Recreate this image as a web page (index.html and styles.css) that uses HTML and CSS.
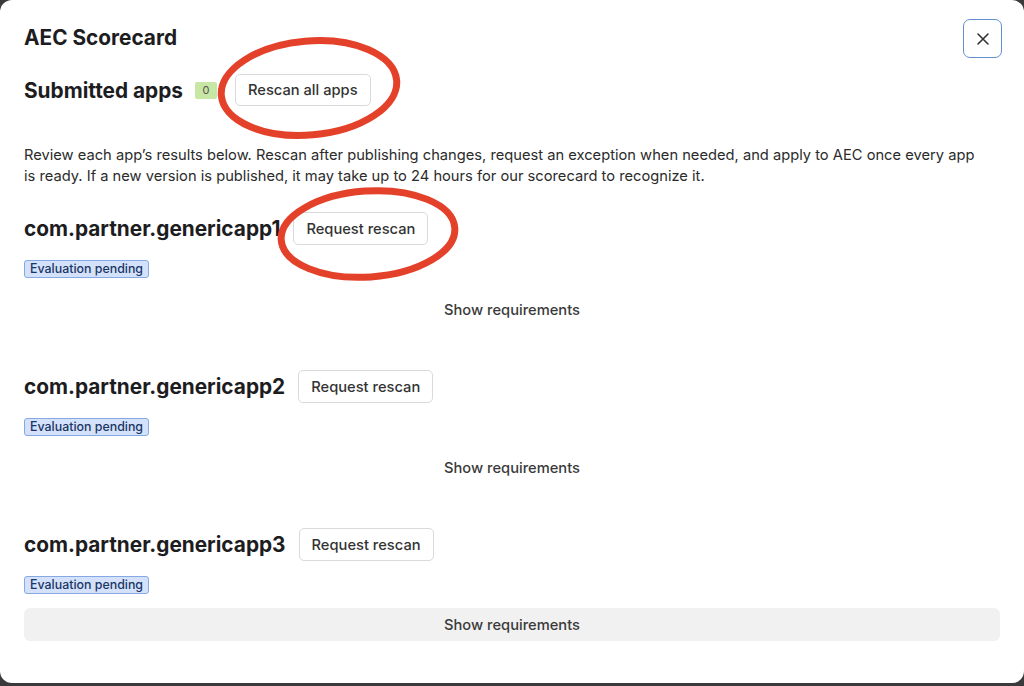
FILE: index.html
```html
<!DOCTYPE html>
<html lang="en">
<head>
	<meta charset="UTF-8">
	<title>AEC Scorecard</title>
	<link rel="stylesheet" href="styles.css">
</head>
<body>
	<div class="modal">
		<button class="close" aria-label="Close">
			<svg width="14" height="14" viewBox="0 0 14 14"><path d="M2 2L12 12M12 2L2 12" stroke="#333" stroke-width="1.6" stroke-linecap="round"/></svg>
		</button>

		<h1 class="title">AEC Scorecard</h1>

		<div class="submitted">
			<h2 class="submitted-title">Submitted apps</h2>
			<span class="count">0</span>
			<button class="btn rescan-all">Rescan all apps</button>
		</div>

		<p class="intro">Review each app’s results below. Rescan after publishing changes, request an exception when needed, and apply to AEC once every app is ready. If a new version is published, it may take up to 24 hours for our scorecard to recognize it.</p>

		<div class="app">
			<div class="app-head">
				<h3 class="app-name">com.partner.genericapp1</h3>
				<button class="btn">Request rescan</button>
			</div>
			<span class="status">Evaluation pending</span>
			<button class="toggle">Show requirements</button>
		</div>

		<div class="app">
			<div class="app-head">
				<h3 class="app-name">com.partner.genericapp2</h3>
				<button class="btn">Request rescan</button>
			</div>
			<span class="status">Evaluation pending</span>
			<button class="toggle">Show requirements</button>
		</div>

		<div class="app">
			<div class="app-head">
				<h3 class="app-name">com.partner.genericapp3</h3>
				<button class="btn">Request rescan</button>
			</div>
			<span class="status">Evaluation pending</span>
			<button class="toggle hover">Show requirements</button>
		</div>

		<!-- annotation marks -->
		<svg class="marks" width="1024" height="686" viewBox="0 0 1024 686">
			<ellipse cx="309" cy="88" rx="88" ry="47" transform="rotate(-5 309 88)" fill="none" stroke="#e4412b" stroke-width="7"/>
			<ellipse cx="368" cy="234" rx="87" ry="43" transform="rotate(-4 368 234)" fill="none" stroke="#e4412b" stroke-width="7"/>
		</svg>
	</div>
</body>
</html>
```

FILE: styles.css
```css
*{
	padding: 0;
	margin: 0;
	box-sizing: border-box;
}
body{
	background-color: #3a3a3c;
	font-family: Inter, "Liberation Sans", sans-serif;
	color: #1d1d1f;
}
.modal{
	position: relative;
	width: 1024px;
	height: 683px;
	background-color: #fff;
	border-radius: 12px;
	padding: 24px 24px 0 24px;
}
.close{
	position: absolute;
	top: 19px;
	right: 22px;
	width: 39px;
	height: 39px;
	border: 1.5px solid #5f8fcf;
	border-radius: 7px;
	background: #fff;
	display: flex;
	align-items: center;
	justify-content: center;
}
.title{
	font-size: 20.8px;
	font-weight: 700;
	line-height: 28px;
}
.submitted{
	display: flex;
	align-items: center;
	margin-top: 22px;
	height: 32px;
}
.submitted-title{
	font-size: 20.8px;
	font-weight: 700;
}
.count{
	margin-left: 12px;
	background-color: #c8e6a4;
	color: #555;
	font-size: 11px;
	line-height: 17px;
	width: 22px;
	text-align: center;
	border-radius: 2px;
}
.btn{
	font-family: inherit;
	font-size: 14.7px;
	font-weight: 500;
	color: #333;
	background: #fff;
	border: 1px solid #dadada;
	border-radius: 5px;
	height: 33px;
	padding: 0 12px;
}
.rescan-all{
	margin-left: 18px;
	height: 32px;
}
.intro{
	margin-top: 39px;
	max-width: 955px;
	font-size: 14.7px;
	line-height: 21px;
	color: #2b2b2b;
}
.app{
	display: flex;
	flex-direction: column;
	align-items: flex-start;
	margin-top: 25px;
}
.app + .app{
	margin-top: 44px;
}
.app-head{
	display: flex;
	align-items: center;
	gap: 13px;
}
.app-name{
	font-size: 20.8px;
	font-weight: 700;
}
.status{
	margin-top: 15px;
	font-size: 12.4px;
	font-weight: 500;
	line-height: 16px;
	color: #1b3566;
	background-color: #d3e2fa;
	border: 1px solid #86a9e3;
	border-radius: 3px;
	padding: 0 5px;
}
.toggle{
	margin-top: 15px;
	width: 100%;
	height: 33px;
	border: none;
	border-radius: 6px;
	background: transparent;
	font-family: inherit;
	font-size: 14.7px;
	font-weight: 500;
	color: #3a3a3a;
}
.app:last-of-type .toggle{
	margin-top: 14px;
}
.toggle.hover{
	background-color: #f1f1f1;
}
.marks{
	position: absolute;
	top: 0;
	left: 0;
	pointer-events: none;
}
```
